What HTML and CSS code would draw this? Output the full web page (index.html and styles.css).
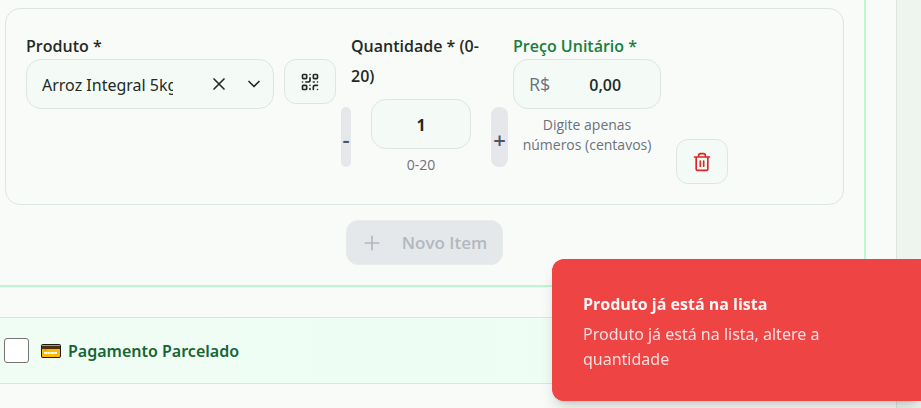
FILE: index.html
```html
<!DOCTYPE html>
<html lang="pt-BR">
<head>
<meta charset="utf-8">
<meta name="viewport" content="width=device-width, initial-scale=1">
<title>Itens do pedido</title>
<link rel="stylesheet" href="styles.css">
</head>
<body>
<main class="panel">
  <section class="items">
    <div class="item-card">
      <div class="product">
        <label class="label" for="product">Produto *</label>
        <div class="product-row">
          <div class="field combo">
            <input class="combo-input" id="product" type="text" value="Arroz Integral 5kg">
            <button class="combo-btn" type="button" aria-label="Limpar">
              <svg class="icon" viewBox="0 0 24 24"><path d="M18 6 6 18M6 6l12 12"/></svg>
            </button>
            <button class="combo-btn" type="button" aria-label="Abrir lista">
              <svg class="icon" viewBox="0 0 24 24"><path d="m6 9 6 6 6-6"/></svg>
            </button>
          </div>
          <button class="icon-btn" type="button" aria-label="Ler código">
            <svg class="icon" viewBox="0 0 24 24"><rect width="5" height="5" x="3" y="3" rx="1"/><rect width="5" height="5" x="16" y="3" rx="1"/><rect width="5" height="5" x="3" y="16" rx="1"/><path d="M21 16h-3a2 2 0 0 0-2 2v3M21 21v.01M12 7v3a2 2 0 0 1-2 2H7M3 12h.01M12 3h.01M12 16v.01M16 12h1M21 12v.01M12 21v-1"/></svg>
          </button>
        </div>
      </div>

      <div class="quantity">
        <label class="label quantity-label" for="quantity">Quantidade * (0-<wbr>20)</label>
        <div class="stepper">
          <button class="step step-minus" type="button">-</button>
          <div class="stepper-value">
            <input class="field number" id="quantity" type="text" inputmode="numeric" value="1">
            <span class="hint">0-20</span>
          </div>
          <button class="step step-plus" type="button">+</button>
        </div>
      </div>

      <div class="price">
        <label class="label label-green" for="price">Preço Unitário *</label>
        <div class="field money">
          <span class="currency">R$</span>
          <input class="money-input" id="price" type="text" inputmode="decimal" value="0,00">
        </div>
        <span class="hint">Digite apenas números (centavos)</span>
      </div>

      <button class="icon-btn remove" type="button" aria-label="Remover item">
        <svg class="icon" viewBox="0 0 24 24"><path d="M3 6h18M19 6v14a2 2 0 0 1-2 2H7a2 2 0 0 1-2-2V6M8 6V4a2 2 0 0 1 2-2h4a2 2 0 0 1 2 2v2M10 11v6M14 11v6"/></svg>
      </button>
    </div>

    <button class="new-item" type="button" disabled>
      <svg class="icon" viewBox="0 0 24 24"><path d="M4 12h16M12 4v16"/></svg>
      Novo Item
    </button>
  </section>

  <section class="installments">
    <input class="check" id="installments" type="checkbox">
    <label class="installments-label" for="installments">
      <svg class="card-icon" viewBox="0 0 20 14" aria-hidden="true">
        <rect width="20" height="14" rx="2" fill="#1d1a14"/>
        <rect x="1" y="1" width="18" height="12" rx="1" fill="#ffb900"/>
        <path d="M1 2h18v3H1z" fill="#4a3310"/>
        <path d="M1 1h18v1H1z" fill="#d99a12"/>
        <path d="M3 9h13" stroke="#fff" stroke-width="2" stroke-dasharray="3 .4"/>
        <path d="M3 6h3" stroke="#d78b00"/>
      </svg>
      Pagamento Parcelado
    </label>
  </section>
</main>

<div class="toast" role="alert">
  <strong class="toast-title">Produto já está na lista</strong>
  <p class="toast-text">Produto já está na lista, altere a quantidade</p>
</div>
</body>
</html>
```
FILE: styles.css
```css
* {
  box-sizing: border-box;
}

body {
  margin: 0;
  min-height: 100vh;
  padding-right: 24px;
  background: #eef5ef;
  color: #222b25;
  font: 400 16px/24px "Open Sans", "Noto Sans", sans-serif;
  overflow: hidden;
}

button,
input {
  margin: 0;
  font: inherit;
  color: inherit;
}

.icon {
  width: 20px;
  height: 20px;
  flex: none;
  fill: none;
  stroke: currentColor;
  stroke-width: 2;
  stroke-linecap: round;
  stroke-linejoin: round;
}

.panel {
  min-height: 100vh;
  padding-right: 30px;
  border-right: 1px solid #dbe5de;
  background: #f9fbf9;
}

.items {
  display: flex;
  flex-direction: column;
  align-items: center;
  gap: 15px;
  padding: 8px 20px 20px 5px;
  border: solid #bbf7d0;
  border-width: 0 2px 2px 0;
}

.item-card {
  display: flex;
  align-items: flex-start;
  gap: 5px;
  width: 100%;
  padding: 22px 20px 20px;
  border: 1px solid #dce6df;
  border-radius: 15px;
}

.label {
  display: block;
  margin-bottom: -2px;
  font-weight: 600;
  line-height: 30px;
}

.label-green {
  color: #15803d;
}

.field {
  height: 50px;
  border: 1px solid #dce6df;
  border-radius: 15px;
  background: #f4fbf6;
}

.hint {
  display: block;
  margin-top: 6px;
  color: #6b7280;
  font-size: 14px;
  line-height: 20px;
  text-align: center;
}

.product {
  width: 310px;
}

.product-row {
  display: flex;
  align-items: flex-start;
  gap: 10px;
}

.combo {
  display: flex;
  align-items: center;
  flex: 1;
  min-width: 0;
  padding: 0 2px 0 15px;
}

.combo-input {
  flex: 1;
  min-width: 0;
  margin-right: 28px;
  padding: 2px 0 0;
  border: 0;
  background: none;
  font-family: "Noto Sans", sans-serif;
}

.combo-btn {
  display: flex;
  justify-content: center;
  width: 35px;
  padding: 0;
  border: 0;
  background: none;
}

.icon-btn {
  display: flex;
  align-items: center;
  justify-content: center;
  width: 52px;
  height: 45px;
  padding: 0;
  border: 1px solid #dce6df;
  border-radius: 12px;
  background: #f4fbf6;
}

.quantity {
  width: 167px;
  padding-bottom: 9px;
}

.quantity-label {
  margin-bottom: 8px;
  padding: 0 20px 0 10px;
}

.stepper {
  display: flex;
  align-items: center;
  justify-content: space-between;
}

.stepper-value {
  width: 100px;
}

.number {
  display: block;
  width: 100%;
  padding: 2px 10px 0;
  font-weight: 700;
  text-align: center;
}

.step {
  height: 60px;
  padding: 4px 0 0;
  border: 0;
  background: #e5e7eb;
  color: #4b5563;
  font-size: 22px;
  font-weight: 600;
  text-align: center;
}

.step-minus {
  width: 10px;
  border-radius: 5px;
}

.step-plus {
  width: 17px;
  border-radius: 8px;
}

.price {
  width: 148px;
}

.money {
  display: flex;
  align-items: center;
  padding-left: 15px;
}

.currency {
  color: #6b7280;
  font-size: 18px;
}

.money-input {
  flex: 1;
  min-width: 0;
  padding: 2px 0 0;
  border: 0;
  background: none;
  font-weight: 600;
  text-align: center;
}

.remove {
  align-self: flex-end;
  margin-left: 10px;
  color: #dc2626;
}

.new-item {
  display: flex;
  align-items: center;
  gap: 20px;
  height: 45px;
  padding: 0 15px;
  border: 1px solid #e8edea;
  border-radius: 12px;
  background: #e4e8ea;
  color: #b3b8be;
  font-size: 17px;
  font-weight: 600;
}

.installments {
  display: flex;
  align-items: center;
  gap: 12px;
  height: 67px;
  margin-top: 30px;
  padding-left: 4px;
  border: solid #bbf7d0;
  border-width: 1px 0;
  background: linear-gradient(90deg, #f0fdf4, #ecfdf5);
}

.check {
  appearance: none;
  width: 25px;
  height: 25px;
  border: 1px solid #767676;
  border-radius: 3px;
  background: #fff;
}

.check:checked {
  background: #15803d;
}

.installments-label {
  display: flex;
  align-items: center;
  gap: 7px;
  color: #166534;
  font-family: "Noto Sans", sans-serif;
  font-weight: 600;
}

.card-icon {
  width: 20px;
  height: 14px;
}

.toast {
  position: fixed;
  right: 0;
  bottom: 7px;
  width: 369px;
  padding: 32px 30px 28px;
  border: solid #ef4444;
  border-width: 1px 0 1px 1px;
  border-radius: 12px 0 0 12px;
  background: #ef4444;
  box-shadow: 0 10px 15px -3px rgb(0 0 0 / 15%), 0 4px 6px -4px rgb(0 0 0 / 15%);
  color: #fef5f5;
  line-height: 25px;
}

.toast-title {
  display: block;
  margin-bottom: 5px;
  font-weight: 700;
}

.toast-text {
  margin: 0;
  color: #fddede;
  font-family: "Noto Sans", sans-serif;
}
```
